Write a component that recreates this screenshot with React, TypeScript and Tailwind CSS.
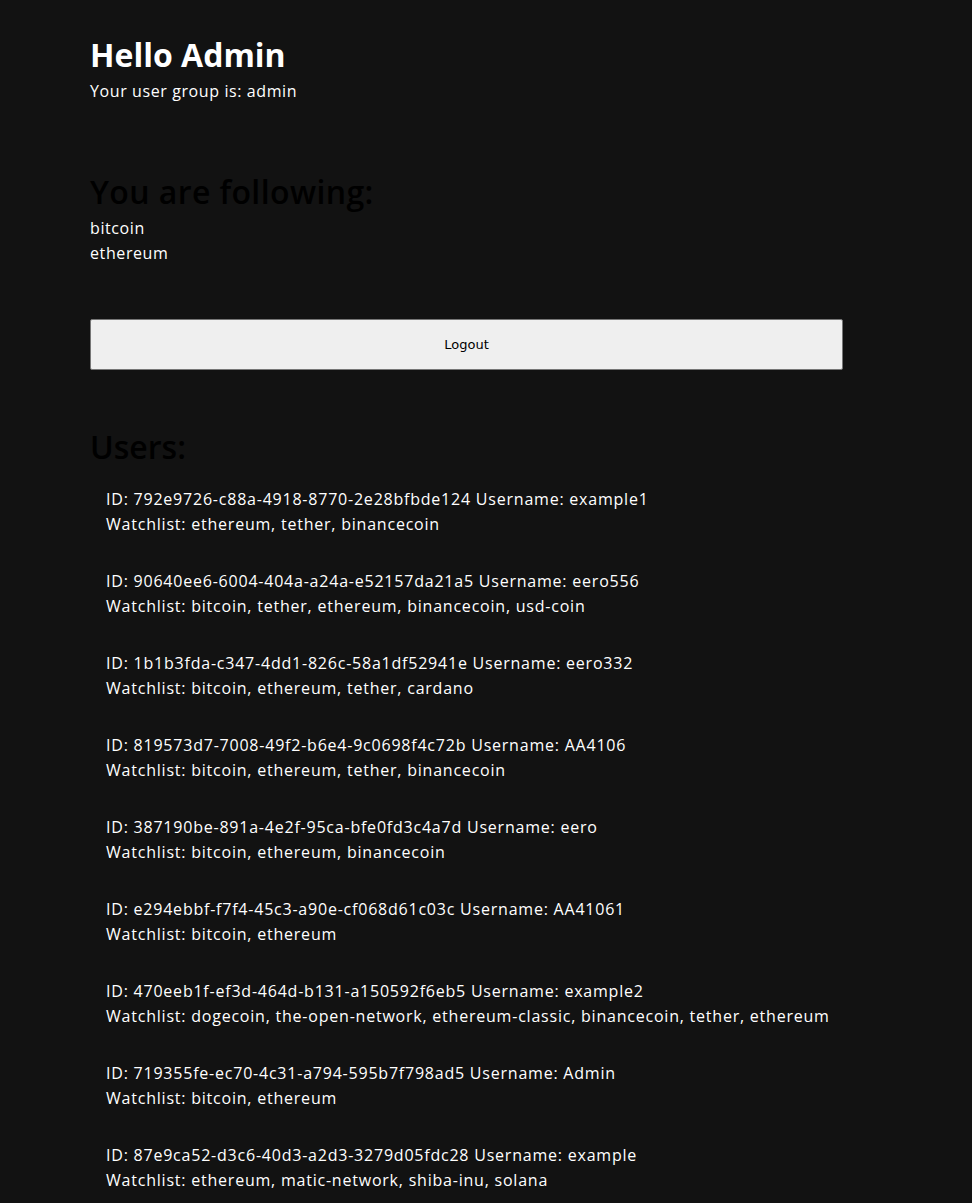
import React from "react";

const users = [
  { id: "792e9726-c88a-4918-8770-2e28bfbde124", name: "example1", watch: "ethereum, tether, binancecoin" },
  { id: "90640ee6-6004-404a-a24a-e52157da21a5", name: "eero556", watch: "bitcoin, tether, ethereum, binancecoin, usd-coin" },
  { id: "1b1b3fda-c347-4dd1-826c-58a1df52941e", name: "eero332", watch: "bitcoin, ethereum, tether, cardano" },
  { id: "819573d7-7008-49f2-b6e4-9c0698f4c72b", name: "AA4106", watch: "bitcoin, ethereum, tether, binancecoin" },
  { id: "387190be-891a-4e2f-95ca-bfe0fd3c4a7d", name: "eero", watch: "bitcoin, ethereum, binancecoin" },
  { id: "e294ebbf-f7f4-45c3-a90e-cf068d61c03c", name: "AA41061", watch: "bitcoin, ethereum" },
  { id: "470eeb1f-ef3d-464d-b131-a150592f6eb5", name: "example2", watch: "dogecoin, the-open-network, ethereum-classic, binancecoin, tether, ethereum" },
  { id: "719355fe-ec70-4c31-a794-595b7f798ad5", name: "Admin", watch: "bitcoin, ethereum" },
  { id: "87e9ca52-d3c6-40d3-a2d3-3279d05fdc28", name: "example", watch: "ethereum, matic-network, shiba-inu, solana" },
];

export default function App() {
  return (
    <div className="min-h-screen bg-[#121212] text-white font-['Open_Sans',sans-serif]">
      <div className="ml-[90px] w-[753px] pt-[31px] pb-10">
        <h1 className="text-[32px] leading-[48px] font-bold">Hello Admin</h1>
        <p className="text-[16px] leading-[25px] font-medium tracking-[0.6px]">Your user group is: admin</p>
        <h2 className="mt-[64px] text-[32px] leading-[48px] font-semibold tracking-[0.4px] text-black">You are following:</h2>
        <p className="text-[16px] leading-[25px] font-medium tracking-[0.6px]">bitcoin</p>
        <p className="text-[16px] leading-[25px] font-medium tracking-[0.6px]">ethereum</p>
        <button className="mt-[53px] w-full h-[51px] bg-[#efefef] border border-[#767676] rounded-[2px] text-black text-[13px] font-['DejaVu_Sans',sans-serif]">
          Logout
        </button>
        <h2 className="mt-[53px] text-[32px] leading-[48px] font-semibold tracking-[0px] text-black">Users:</h2>
        <div className="mt-[16px] pl-4 flex flex-col gap-[32px]">
          {users.map((u) => (
            <div key={u.id} className="text-[16px] leading-[25px] font-medium tracking-[0.78px]">
              <p>ID: {u.id} Username: {u.name}</p>
              <p>Watchlist: {u.watch}</p>
            </div>
          ))}
        </div>
      </div>
    </div>
  );
}
